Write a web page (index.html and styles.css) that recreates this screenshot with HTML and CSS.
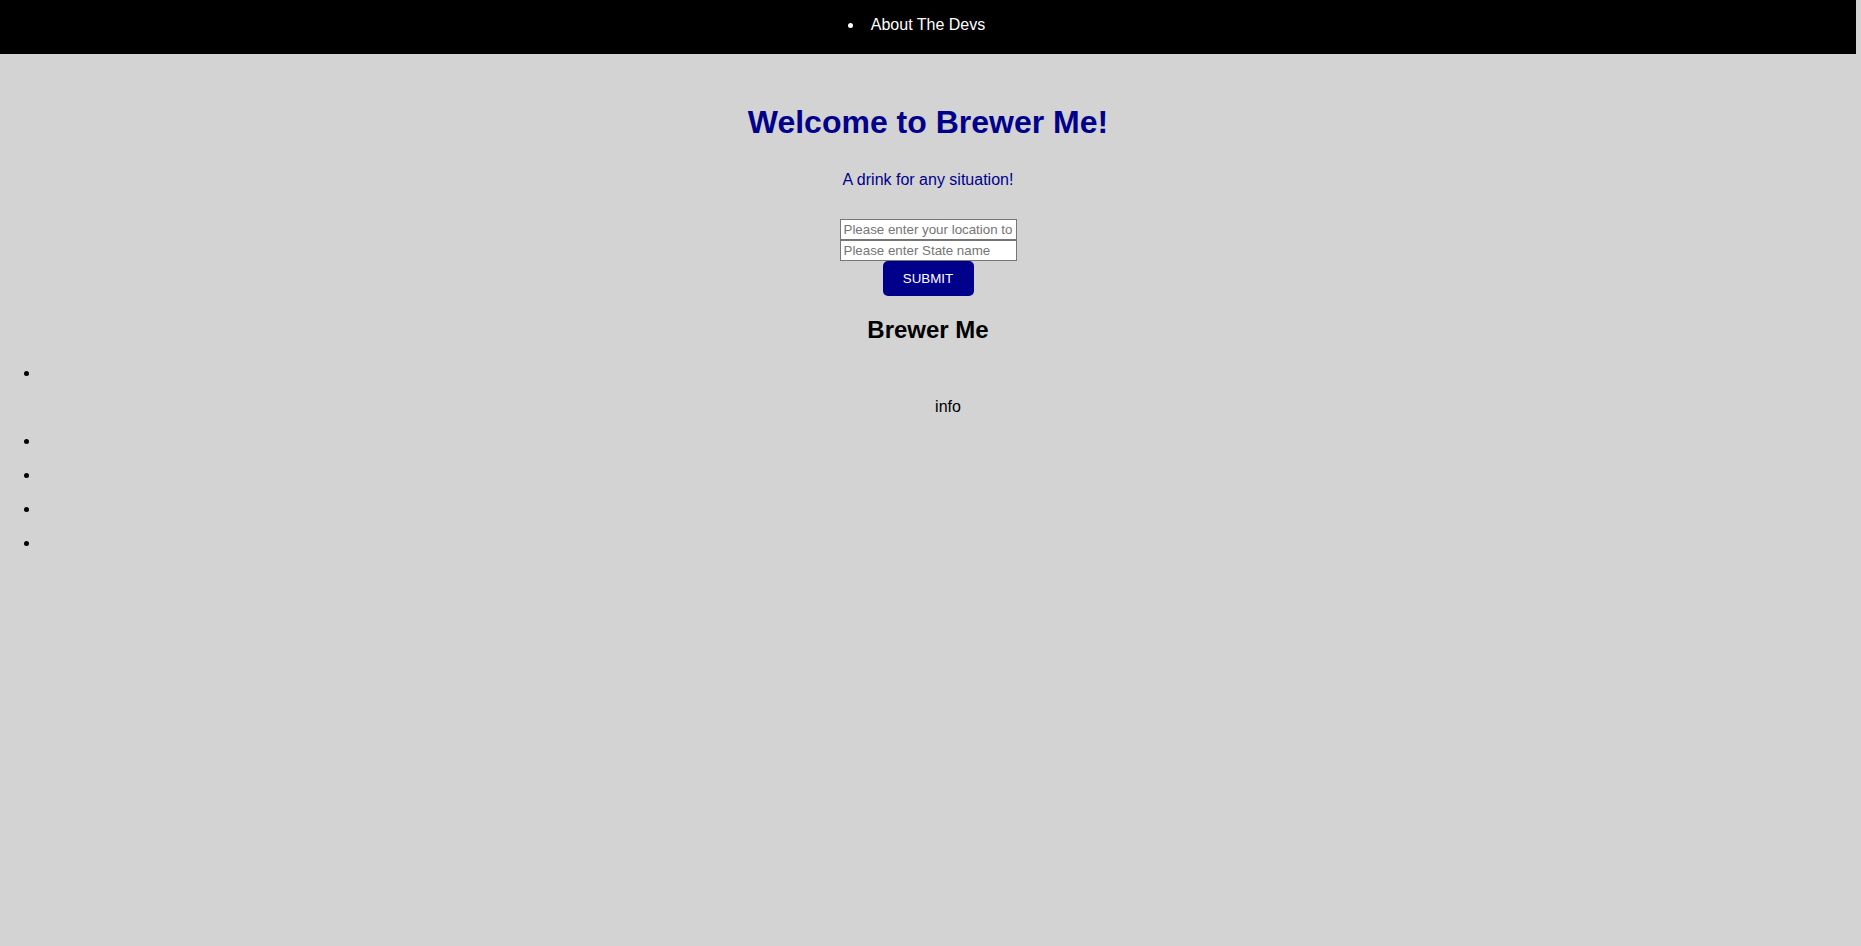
FILE: index.html
```html
<!DOCTYPE html>
<html lang="en">
<head>
<meta charset="utf-8">
<title>Brewer Me</title>
<link rel="stylesheet" href="styles.css">
</head>
<body>
<nav class="topbar">
  <ul class="topbar-list">
    <li class="topbar-item"><a class="topbar-link" href="#">About The Devs</a></li>
  </ul>
</nav>
<main class="main">
  <header class="hero">
    <h1 class="hero-title">Welcome to Brewer Me!</h1>
    <p class="hero-tagline">A drink for any situation!</p>
  </header>
  <form class="search-form">
    <input class="search-input" type="text" placeholder="Please enter your location to find breweries">
    <input class="search-input" type="text" placeholder="Please enter State name">
    <button class="submit-btn" type="button">Submit</button>
  </form>
  <h2 class="results-title">Brewer Me</h2>
  <ul class="results">
    <li class="result">
      <span class="result-name"></span>
      <p class="result-info">info</p>
    </li>
    <li class="result"></li>
    <li class="result"></li>
    <li class="result"></li>
    <li class="result"></li>
  </ul>
</main>
</body>
</html>
```
FILE: styles.css
```css
html {
  background: #d3d3d3;
}
body {
  margin: 0 5px 0 0;
  font-family: "Liberation Sans", Arial, sans-serif;
  font-size: 16px;
  color: #000;
  background: #d3d3d3;
}
.topbar {
  background: #000;
  padding: 0 0 4px;
  display: flow-root;
}
.topbar-list {
  margin: 16px 0;
  padding: 0;
  text-align: center;
  color: #fff;
  list-style: none;
}
.topbar-link {
  position: relative;
  color: #fff;
  text-decoration: none;
}
.topbar-link::before {
  content: "";
  position: absolute;
  left: -23px;
  top: 7px;
  width: 5px;
  height: 5px;
  border-radius: 50%;
  background: #fff;
}
.hero {
  text-align: center;
  color: #00008b;
}
.hero-title {
  margin: 50px 0 30px;
  font-size: 32px;
  font-weight: bold;
}
.hero-tagline {
  margin: 0 0 29.5px;
}
.search-form {
  margin: 0;
}
.search-input {
  display: block;
  margin: 0 auto;
  box-sizing: border-box;
  width: 177px;
  height: 21.4px;
  padding: 0 3px;
  border: 1px solid #767676;
  background: #fff;
  font-family: "Liberation Sans", Arial, sans-serif;
  font-size: 13.333px;
  color: #000;
}
.search-input::placeholder {
  color: #757575;
}
.submit-btn {
  display: block;
  margin: 0 auto;
  width: 91px;
  height: 35px;
  padding: 0;
  border: none;
  border-radius: 5px;
  background: #00008b;
  color: #fff;
  font-family: "Liberation Sans", Arial, sans-serif;
  font-size: 13.333px;
  text-transform: uppercase;
}
.results-title {
  margin: 20px 0;
  text-align: center;
  font-size: 24px;
  font-weight: bold;
}
.results {
  margin: 16px 0;
  padding-left: 40px;
  list-style: disc;
  line-height: 18px;
}
.result {
  min-height: 18px;
  margin-bottom: 16px;
}
.result-name {
  display: inline-block;
}
.result-info {
  margin: 16px 0;
  text-align: center;
}
```
